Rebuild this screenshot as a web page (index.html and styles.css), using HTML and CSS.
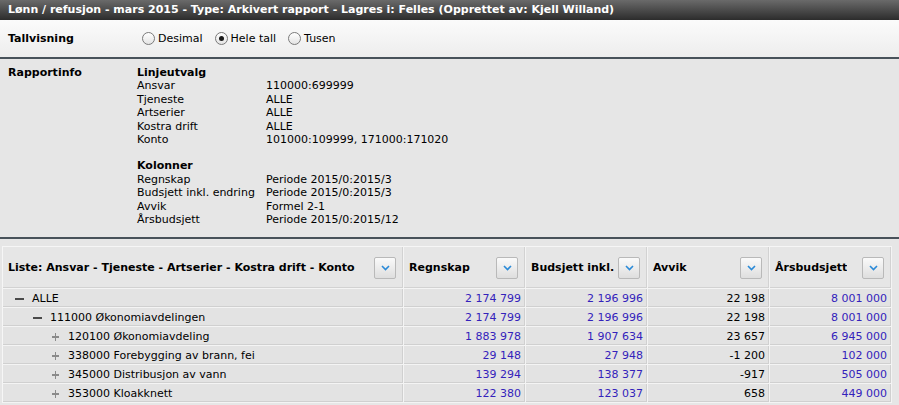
FILE: index.html
```html
<!DOCTYPE html>
<html lang="no">
<head>
    <meta charset="UTF-8">
    <title>Lønn / refusjon - mars 2015</title>
    <link rel="stylesheet" href="styles.css">
</head>
<body>

    <!-- Tittel -->
    <div class="titlebar">Lønn / refusjon - mars 2015 - Type: Arkivert rapport - Lagres i: Felles (Opprettet av: Kjell Willand)</div>

    <!-- Tallvisning -->
    <div class="tallvisning">
        <div class="section-label">Tallvisning</div>
        <label class="radio"><input type="radio" name="tall"> Desimal</label>
        <label class="radio"><input type="radio" name="tall" checked> Hele tall</label>
        <label class="radio"><input type="radio" name="tall"> Tusen</label>
    </div>

    <!-- Rapportinfo -->
    <div class="rapportinfo">
        <div class="section-label">Rapportinfo</div>
        <div class="info">
            <div class="info-group">
                <div class="info-title">Linjeutvalg</div>
                <div class="info-row"><span>Ansvar</span><span>110000:699999</span></div>
                <div class="info-row"><span>Tjeneste</span><span>ALLE</span></div>
                <div class="info-row"><span>Artserier</span><span>ALLE</span></div>
                <div class="info-row"><span>Kostra drift</span><span>ALLE</span></div>
                <div class="info-row"><span>Konto</span><span>101000:109999, 171000:171020</span></div>
            </div>
            <div class="info-group">
                <div class="info-title">Kolonner</div>
                <div class="info-row"><span>Regnskap</span><span>Periode 2015/0:2015/3</span></div>
                <div class="info-row"><span>Budsjett inkl. endring</span><span>Periode 2015/0:2015/3</span></div>
                <div class="info-row"><span>Avvik</span><span>Formel 2-1</span></div>
                <div class="info-row"><span>Årsbudsjett</span><span>Periode 2015/0:2015/12</span></div>
            </div>
        </div>
    </div>

    <!-- Liste -->
    <div class="list-wrap">
        <table class="report">
            <colgroup>
                <col class="col-name">
                <col class="col-num">
                <col class="col-num">
                <col class="col-num">
                <col class="col-num">
            </colgroup>
            <thead>
                <tr>
                    <th><div class="th-inner"><span>Liste: Ansvar - Tjeneste - Artserier - Kostra drift - Konto</span><button class="dd"><svg width="9" height="6" viewBox="0 0 9 6"><path d="M1 1 L4.5 4.5 L8 1" fill="none" stroke="#2a8ad8" stroke-width="1.6"/></svg></button></div></th>
                    <th><div class="th-inner"><span>Regnskap</span><button class="dd"><svg width="9" height="6" viewBox="0 0 9 6"><path d="M1 1 L4.5 4.5 L8 1" fill="none" stroke="#2a8ad8" stroke-width="1.6"/></svg></button></div></th>
                    <th><div class="th-inner"><span>Budsjett inkl.</span><button class="dd"><svg width="9" height="6" viewBox="0 0 9 6"><path d="M1 1 L4.5 4.5 L8 1" fill="none" stroke="#2a8ad8" stroke-width="1.6"/></svg></button></div></th>
                    <th><div class="th-inner"><span>Avvik</span><button class="dd"><svg width="9" height="6" viewBox="0 0 9 6"><path d="M1 1 L4.5 4.5 L8 1" fill="none" stroke="#2a8ad8" stroke-width="1.6"/></svg></button></div></th>
                    <th><div class="th-inner"><span>Årsbudsjett</span><button class="dd"><svg width="9" height="6" viewBox="0 0 9 6"><path d="M1 1 L4.5 4.5 L8 1" fill="none" stroke="#2a8ad8" stroke-width="1.6"/></svg></button></div></th>
                </tr>
            </thead>
            <tbody>
                <tr>
                    <td class="name lvl1"><span class="tree minus"></span>ALLE</td>
                    <td class="num link">2 174 799</td>
                    <td class="num link">2 196 996</td>
                    <td class="num">22 198</td>
                    <td class="num link">8 001 000</td>
                </tr>
                <tr>
                    <td class="name lvl2"><span class="tree minus"></span>111000 Økonomiavdelingen</td>
                    <td class="num link">2 174 799</td>
                    <td class="num link">2 196 996</td>
                    <td class="num">22 198</td>
                    <td class="num link">8 001 000</td>
                </tr>
                <tr>
                    <td class="name lvl3"><span class="tree plus"></span>120100 Økonomiavdeling</td>
                    <td class="num link">1 883 978</td>
                    <td class="num link">1 907 634</td>
                    <td class="num">23 657</td>
                    <td class="num link">6 945 000</td>
                </tr>
                <tr>
                    <td class="name lvl3"><span class="tree plus"></span>338000 Forebygging av brann, fei</td>
                    <td class="num link">29 148</td>
                    <td class="num link">27 948</td>
                    <td class="num">-1 200</td>
                    <td class="num link">102 000</td>
                </tr>
                <tr>
                    <td class="name lvl3"><span class="tree plus"></span>345000 Distribusjon av vann</td>
                    <td class="num link">139 294</td>
                    <td class="num link">138 377</td>
                    <td class="num">-917</td>
                    <td class="num link">505 000</td>
                </tr>
                <tr>
                    <td class="name lvl3"><span class="tree plus"></span>353000 Kloakknett</td>
                    <td class="num link">122 380</td>
                    <td class="num link">123 037</td>
                    <td class="num">658</td>
                    <td class="num link">449 000</td>
                </tr>
            </tbody>
        </table>
    </div>

</body>
</html>
```

FILE: styles.css
```css
body {
    margin: 0;
    font-family: "DejaVu Sans", Verdana, sans-serif;
    font-size: 11px;
    color: #000;
    background-color: #e6e6e6;
}

.titlebar {
    height: 20px;
    line-height: 20px;
    padding-left: 8px;
    color: #fff;
    font-weight: bold;
    white-space: nowrap;
    overflow: hidden;
    background: linear-gradient(#6a6a6a, #2c2c2c);
}

.section-label {
    font-weight: bold;
}

/* Tallvisning */
.tallvisning {
    display: flex;
    align-items: center;
    height: 37px;
    padding-left: 8px;
    background: linear-gradient(#fbfbfb, #ededed);
    border-bottom: 2px solid #48525a;
}

.tallvisning .section-label {
    width: 134px;
}

.radio {
    display: flex;
    align-items: center;
    margin-right: 12px;
}

.radio input {
    appearance: none;
    -webkit-appearance: none;
    position: relative;
    margin: 0 3px 0 0;
    width: 13px;
    height: 13px;
    border: 1px solid #7a7a7a;
    border-radius: 50%;
    background: linear-gradient(#ffffff, #e4e4e4);
}

.radio input:checked::after {
    content: "";
    position: absolute;
    left: 3px;
    top: 3px;
    width: 5px;
    height: 5px;
    border-radius: 50%;
    background-color: #1a1a1a;
}

/* Rapportinfo */
.rapportinfo {
    display: flex;
    padding: 7px 0 11px 8px;
    line-height: 13.4px;
    background-color: #e6e6e6;
    border-bottom: 2px solid #48525a;
}

.rapportinfo .section-label {
    width: 129px;
}

.info-group + .info-group {
    margin-top: 13px;
}

.info-title {
    font-weight: bold;
}

.info-row {
    display: flex;
}

.info-row span:first-child {
    width: 129px;
}

/* Liste */
.list-wrap {
    padding: 7px 0 0 2px;
}

.report {
    table-layout: fixed;
    border-collapse: collapse;
    width: 890px;
    border-top: 1px solid #f6f6f6;
    border-left: 1px solid #f6f6f6;
}

.col-name {
    width: 401px;
}

.col-num {
    width: 122px;
}

.report th {
    height: 41px;
    padding: 0 7px 0 5px;
    text-align: left;
    font-weight: bold;
    background-color: #e6e6e6;
    border-right: 1px solid #f4f4f4;
    border-bottom: 1px solid #f4f4f4;
    box-shadow: inset -1px -1px 0 #d2d2d2;
}

.th-inner {
    display: flex;
    align-items: center;
    justify-content: space-between;
}

.th-inner span {
    white-space: nowrap;
    overflow: hidden;
}

.dd {
    flex: none;
    width: 22px;
    height: 22px;
    padding: 0;
    margin-left: 4px;
    display: flex;
    align-items: center;
    justify-content: center;
    border: 1px solid #b9b9b9;
    border-radius: 2px;
    background: linear-gradient(#fafafa, #dedede);
}

.report td {
    height: 18px;
    padding: 0 4px;
    white-space: nowrap;
    background-color: #e3e3e3;
    border-right: 1px solid #f4f4f4;
    border-bottom: 1px solid #f4f4f4;
    box-shadow: inset -1px -1px 0 #d0d0d0;
}

.num {
    text-align: right;
}

.link {
    color: #3322bb;
}

.name {
    color: #000;
}

.lvl1 {
    padding-left: 12px !important;
}

.lvl2 {
    padding-left: 30px !important;
}

.lvl3 {
    padding-left: 48px !important;
}

.tree {
    display: inline-block;
    position: relative;
    width: 9px;
    height: 9px;
    margin-right: 8px;
    vertical-align: -1px;
}

.tree::before,
.tree::after {
    content: "";
    position: absolute;
    background-color: #4a4a4a;
}

.tree::before {
    left: 0;
    right: 0;
    top: 4px;
    height: 2px;
}

.plus::before {
    left: 1px;
    right: 1px;
    top: 4px;
    height: 2px;
    background-color: #8a8a8a;
}

.plus::after {
    top: 1px;
    bottom: 0;
    left: 4px;
    width: 1px;
    background-color: #8a8a8a;
}

.minus::after {
    display: none;
}
```
